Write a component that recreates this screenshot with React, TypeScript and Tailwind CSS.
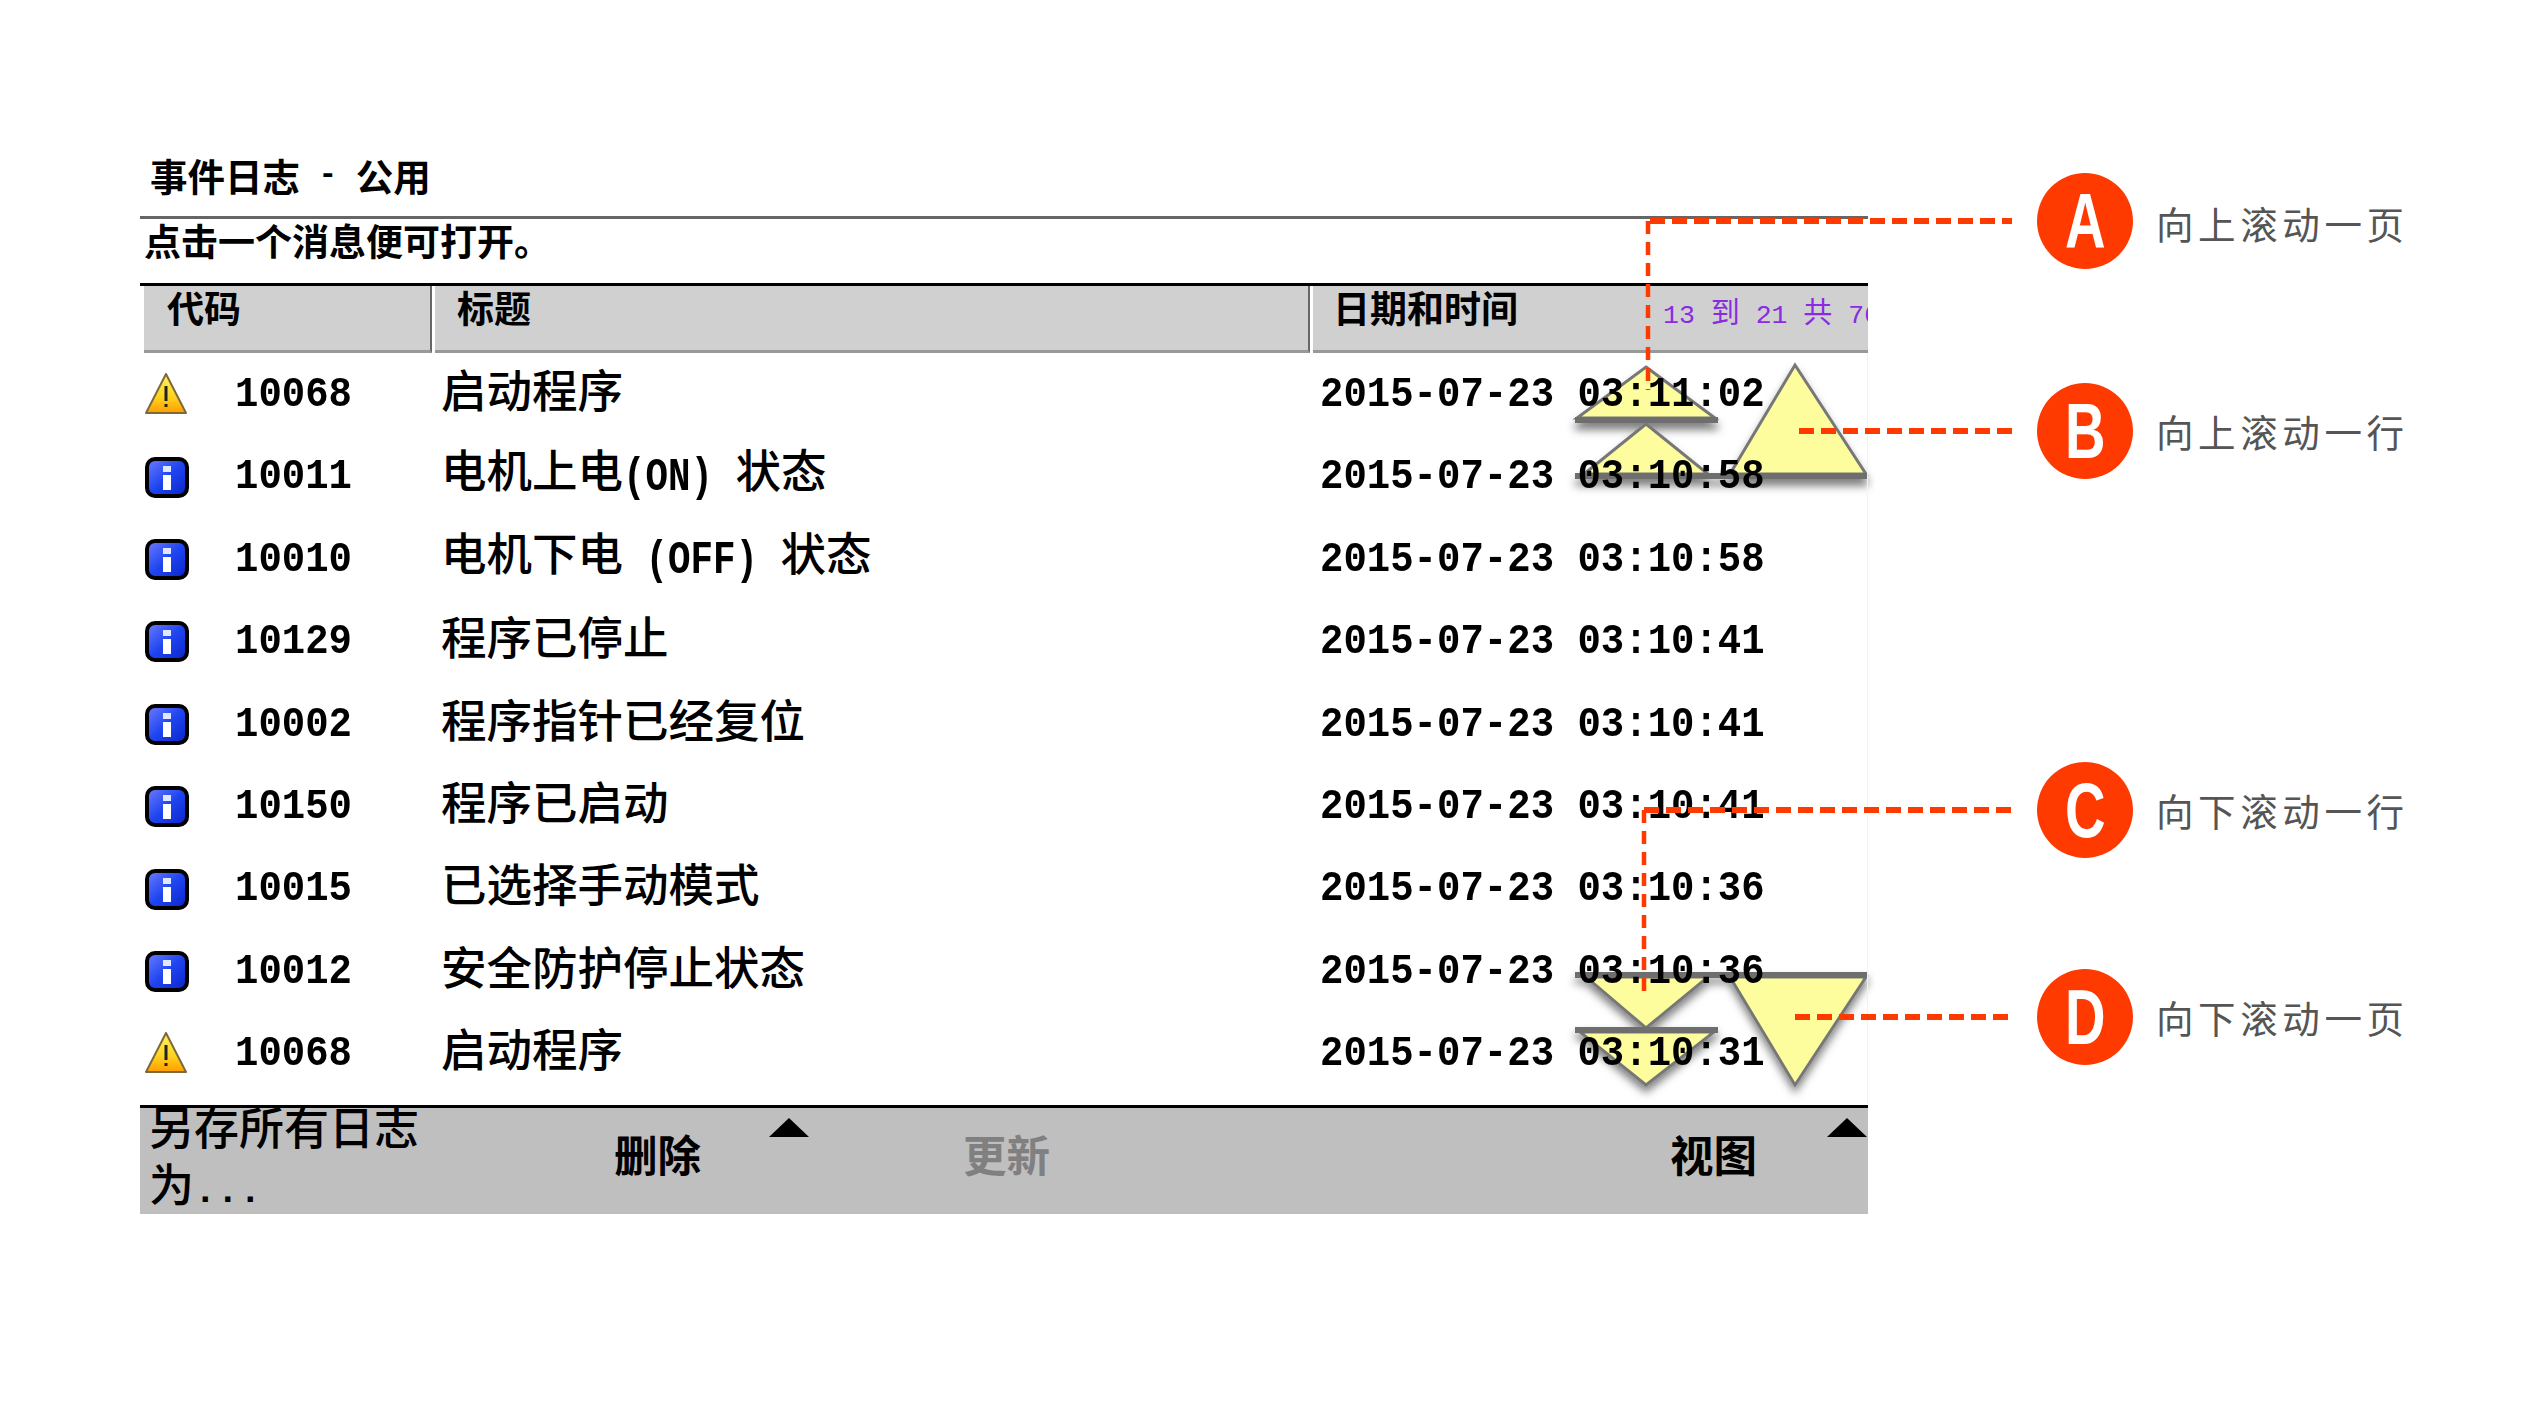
import type { ReactNode } from "react";

const cjk = "font-['Noto_Sans_CJK_SC',sans-serif]";
const mono = "font-['Liberation_Mono',monospace]";

interface LogRow {
  kind: "warn" | "info";
  code: string;
  title: ReactNode;
  time: string;
}

const Latin = ({ children }: { children: ReactNode }) => (
  <span className={`${mono} inline-block scale-y-125 text-[37.5px] font-bold`}>{children}</span>
);

const rows: LogRow[] = [
  { kind: "warn", code: "10068", title: "启动程序", time: "2015-07-23 03:11:02" },
  { kind: "info", code: "10011", title: <>电机上电<Latin>(ON) </Latin>状态</>, time: "2015-07-23 03:10:58" },
  { kind: "info", code: "10010", title: <>电机下电<Latin> (OFF) </Latin>状态</>, time: "2015-07-23 03:10:58" },
  { kind: "info", code: "10129", title: "程序已停止", time: "2015-07-23 03:10:41" },
  { kind: "info", code: "10002", title: "程序指针已经复位", time: "2015-07-23 03:10:41" },
  { kind: "info", code: "10150", title: "程序已启动", time: "2015-07-23 03:10:41" },
  { kind: "info", code: "10015", title: "已选择手动模式", time: "2015-07-23 03:10:36" },
  { kind: "info", code: "10012", title: "安全防护停止状态", time: "2015-07-23 03:10:36" },
  { kind: "warn", code: "10068", title: "启动程序", time: "2015-07-23 03:10:31" },
];

const callouts = [
  { letter: "A", label: "向上滚动一页" },
  { letter: "B", label: "向上滚动一行" },
  { letter: "C", label: "向下滚动一行" },
  { letter: "D", label: "向下滚动一页" },
];

const WarnIcon = () => (
  <svg width="42" height="42" viewBox="0 0 42 42">
    <defs>
      <linearGradient id="warnFill" x1="0" y1="0" x2="0" y2="1">
        <stop offset="0" stopColor="#fff35a" />
        <stop offset="0.6" stopColor="#ffd21e" />
        <stop offset="1" stopColor="#ff9d00" />
      </linearGradient>
    </defs>
    <path d="M21 1 L41 40 L1 40 Z" fill="url(#warnFill)" stroke="#7c6a3c" strokeWidth="2" strokeLinejoin="round" />
    <rect x="19.5" y="13" width="3" height="15" fill="#222" />
    <rect x="19.5" y="31" width="3" height="3" fill="#222" />
  </svg>
);

const InfoIcon = () => (
  <svg width="46" height="42" viewBox="0 0 46 42" className="mt-[2px]">
    <defs>
      <linearGradient id="infoFill" x1="0" y1="0" x2="1" y2="1">
        <stop offset="0" stopColor="#6f7dff" />
        <stop offset="0.5" stopColor="#1f45f0" />
        <stop offset="1" stopColor="#0a23c8" />
      </linearGradient>
    </defs>
    <rect x="2" y="2" width="40" height="37" rx="8" fill="url(#infoFill)" stroke="#000" strokeWidth="4" />
    <rect x="18" y="9" width="8" height="6" fill="#dfe6ff" />
    <rect x="18" y="18" width="8" height="15" fill="#fff" />
  </svg>
);

const UpTriangles = () => (
  <svg className="absolute left-[1565px] top-[355px] z-0" width="310" height="145" viewBox="1565 355 310 145">
    <defs>
      <filter id="upShadow" x="-10%" y="-10%" width="120%" height="130%">
        <feDropShadow dx="0" dy="7" stdDeviation="4" floodColor="#000" floodOpacity="0.5" />
      </filter>
    </defs>
    <g filter="url(#upShadow)">
      <path d="M1646 367 L1715 418 L1577 418 Z" fill="#fdfd9e" stroke="#777" strokeWidth="3" />
      <rect x="1575" y="417" width="143" height="6" fill="#6e6e6e" />
      <path d="M1646 424 L1708 474 L1584 474 Z" fill="#fdfd9e" stroke="#777" strokeWidth="3" />
      <path d="M1795 365 L1866 474 L1730 474 Z" fill="#fdfd9e" stroke="#777" strokeWidth="3" />
      <rect x="1575" y="473" width="293" height="6" fill="#6e6e6e" />
    </g>
  </svg>
);

const DownTriangles = () => (
  <svg className="absolute left-[1565px] top-[965px] z-0" width="310" height="140" viewBox="1565 965 310 140">
    <defs>
      <filter id="downShadow" x="-10%" y="-10%" width="120%" height="130%">
        <feDropShadow dx="0" dy="6" stdDeviation="4" floodColor="#000" floodOpacity="0.5" />
      </filter>
    </defs>
    <g filter="url(#downShadow)">
      <path d="M1586 977 L1708 977 L1646 1028 Z" fill="#fdfd9e" stroke="#777" strokeWidth="3" />
      <path d="M1730 977 L1866 977 L1795 1085 Z" fill="#fdfd9e" stroke="#777" strokeWidth="3" />
      <rect x="1575" y="972" width="293" height="6" fill="#6e6e6e" />
      <path d="M1580 1032 L1714 1032 L1646 1085 Z" fill="#fdfd9e" stroke="#777" strokeWidth="3" />
      <rect x="1575" y="1027" width="143" height="6" fill="#6e6e6e" />
    </g>
  </svg>
);

const LeaderLines = () => (
  <svg className="absolute left-0 top-0 z-20 pointer-events-none" width="2528" height="1422" viewBox="0 0 2528 1422">
    <g fill="none" stroke="#ff3a00">
      <g strokeWidth="6" strokeDasharray="15 7">
        <path d="M1650 221 H2012" />
        <path d="M1799 431 H2012" />
        <path d="M1644 810 H2012" />
        <path d="M1795 1017 H2012" />
      </g>
      <g strokeWidth="4.5" strokeDasharray="13 8">
        <path d="M1648 221 V390" />
        <path d="M1644 810 V997" />
      </g>
    </g>
  </svg>
);

const ScrollMark = () => <div className="h-0 w-0 border-x-[20px] border-b-[19px] border-x-transparent border-b-black" />;

export default function App() {
  return (
    <div className={`relative h-[1422px] w-[2528px] overflow-hidden bg-white text-black ${cjk}`}>
      <UpTriangles />
      <DownTriangles />

      <div className="relative z-10 ml-[140px] w-[1728px] pt-[150px]">
        <div className="flex h-[50px] items-center pl-[10px] text-[37.5px] font-bold whitespace-pre">
          事件日志<span className={`${mono} text-[31px]`}> - </span>公用
        </div>
        <div className="mt-[16px] h-[49px] border-t-[3px] border-[#666] pl-[4px] text-[37px] leading-[42px] font-bold">
          点击一个消息便可打开。
        </div>

        <div className="mt-[18px] flex h-[70px] border-t-[3px] border-black pl-[4px] text-[37px] font-bold">
          <div className="flex w-[288px] items-start border-r-2 border-b-[3px] border-r-[#666] border-b-[#999] bg-[#d0d0d0] pl-[23px]">
            <span className="leading-[42px]">代码</span>
          </div>
          <div className="ml-[3px] flex w-[875px] items-start border-r-2 border-b-[3px] border-r-[#666] border-b-[#999] bg-[#d0d0d0] pl-[22px]">
            <span className="leading-[42px]">标题</span>
          </div>
          <div className="ml-[3px] flex w-[555px] items-start whitespace-nowrap border-b-[3px] border-b-[#999] bg-[#d0d0d0] pl-[20px]">
            <span className="w-[330px] shrink-0 leading-[42px]">日期和时间</span>
            <div className="min-w-0 flex-1 overflow-hidden pt-[2px] text-[29px] leading-[44px] font-normal text-[#8a2be2]">
              <span className={`${mono} text-[26.5px]`}>13 </span>到<span className={`${mono} text-[26.5px]`}> 21 </span>共<span className={`${mono} text-[26.5px]`}> 70</span>
            </div>
          </div>
        </div>

        <div className="border-r border-[#f2f2f2] pb-[10px]">
          {rows.map((row, i) => (
            <div key={i} className="flex h-[82.4px] items-center whitespace-pre">
              <div className="flex w-[95px] pl-[5px]">{row.kind === "warn" ? <WarnIcon /> : <InfoIcon />}</div>
              <div className={`w-[205px] ${mono} mt-[2px] scale-y-110 text-[39px] font-bold`}>{row.code}</div>
              <div className="-mt-[12px] w-[880px] pl-[1px] text-[45.5px] font-medium">{row.title}</div>
              <div className={`${mono} mt-[2px] scale-y-110 text-[39px] font-bold`}>{row.time}</div>
            </div>
          ))}
        </div>

        <div className="relative flex h-[109px] border-t-[3px] border-black bg-[#bfbfbf]">
          <div className="-mt-[11px] w-[290px] pl-[9px] text-[45px] leading-[57px] font-medium">
            另存所有日志为<span className={`${mono} text-[37.5px] leading-none font-bold`}>...</span>
          </div>
          <div className="w-[339px] pl-[184px] text-[43.5px] leading-[92px] font-bold">删除</div>
          <div className="pl-[194px] text-[43.5px] leading-[92px] font-bold text-[#808080]">更新</div>
          <div className="ml-[620px] text-[43.5px] leading-[92px] font-bold">视图</div>
          <div className="absolute left-[629px] top-[10px]"><ScrollMark /></div>
          <div className="absolute left-[1687px] top-[10px]"><ScrollMark /></div>
        </div>
      </div>

      <LeaderLines />

      {callouts.map((c, i) => (
        <div
          key={c.letter}
          className={`absolute left-[2037px] z-30 flex items-center gap-[23px] ${["top-[173px]", "top-[383px]", "top-[762px]", "top-[969px]"][i]}`}
        >
          <div className="flex h-[96px] w-[96px] items-center justify-center rounded-full bg-[#ff3a00]">
            <span className="inline-block scale-x-[0.72] font-['Liberation_Sans',sans-serif] text-[78px] leading-none font-bold text-white">
              {c.letter}
            </span>
          </div>
          <span className={`text-[37.5px] tracking-[4.6px] text-[#555] ${i === 0 ? "pt-[4px]" : ""}`}>{c.label}</span>
        </div>
      ))}
    </div>
  );
}
